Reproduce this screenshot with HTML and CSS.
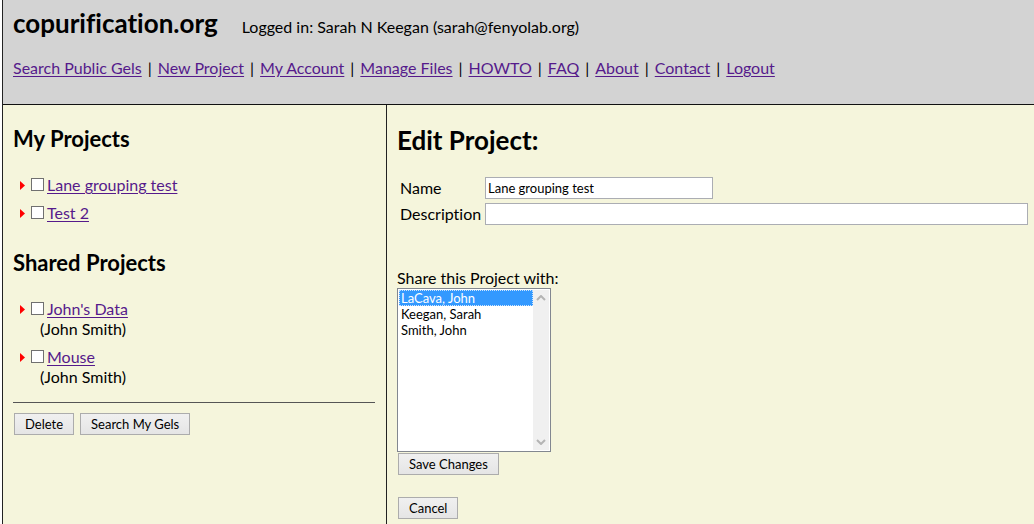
FILE: index.html
```html
<!DOCTYPE html>
<html lang="en">
<head>
<meta charset="utf-8">
<title>copurification.org</title>
<link rel="stylesheet" href="styles.css">
</head>
<body>
<div class="page">
  <header class="header">
    <div class="brand">
      <h1 class="site-name">copurification.org</h1>
      <span>Logged in: Sarah N Keegan (sarah@fenyolab.org)</span>
    </div>
    <nav class="nav">
      <a href="#">Search Public Gels</a><span>|</span>
      <a href="#">New Project</a><span>|</span>
      <a href="#">My Account</a><span>|</span>
      <a href="#">Manage Files</a><span>|</span>
      <a href="#">HOWTO</a><span>|</span>
      <a href="#">FAQ</a><span>|</span>
      <a href="#">About</a><span>|</span>
      <a href="#">Contact</a><span>|</span>
      <a href="#">Logout</a>
    </nav>
  </header>
  <div class="columns">
    <aside class="sidebar">
      <h2 class="section-title">My Projects</h2>
      <ul class="projects">
        <li>
          <div class="project"><svg class="arrow" viewBox="0 0 5 9"><path d="M0 0L5 4.500L0 9Z"/></svg><input type="checkbox" class="check" aria-label="Select Lane grouping test"><a href="#">Lane grouping test</a></div>
        </li>
        <li>
          <div class="project"><svg class="arrow" viewBox="0 0 5 9"><path d="M0 0L5 4.500L0 9Z"/></svg><input type="checkbox" class="check" aria-label="Select Test 2"><a href="#">Test 2</a></div>
        </li>
      </ul>
      <h2 class="section-title">Shared Projects</h2>
      <ul class="projects">
        <li>
          <div class="project"><svg class="arrow" viewBox="0 0 5 9"><path d="M0 0L5 4.500L0 9Z"/></svg><input type="checkbox" class="check" aria-label="Select John's Data"><a href="#">John's Data</a></div>
          <div class="owner">(John Smith)</div>
        </li>
        <li>
          <div class="project"><svg class="arrow" viewBox="0 0 5 9"><path d="M0 0L5 4.500L0 9Z"/></svg><input type="checkbox" class="check" aria-label="Select Mouse"><a href="#">Mouse</a></div>
          <div class="owner">(John Smith)</div>
        </li>
      </ul>
      <hr class="rule">
      <div class="actions">
        <button class="button" type="button">Delete</button>
        <button class="button" type="button">Search My Gels</button>
      </div>
    </aside>
    <main class="main">
      <h2 class="form-title">Edit Project:</h2>
      <form>
        <div class="fields">
          <label for="name">Name</label>
          <input class="text name" id="name" type="text" value="Lane grouping test">
          <label for="description">Description</label>
          <input class="text" id="description" type="text">
        </div>
        <label class="share-label" for="share">Share this Project with:</label>
        <div class="listbox">
          <select class="list" id="share" size="10" multiple>
            <option selected>LaCava, John</option>
            <option>Keegan, Sarah</option>
            <option>Smith, John</option>
          </select>
          <div class="track" aria-hidden="true">
            <svg class="chevron" viewBox="0 0 10 6"><path d="M1 5L5 1L9 5"/></svg>
            <svg class="chevron" viewBox="0 0 10 6"><path d="M1 1L5 5L9 1"/></svg>
          </div>
        </div>
        <div class="form-actions">
          <button class="button" type="button">Save Changes</button>
          <button class="button" type="button">Cancel</button>
        </div>
      </form>
    </main>
  </div>
</div>
</body>
</html>
```
FILE: styles.css
```css
* { box-sizing: border-box; }

body {
  margin: 0;
  background: #fff;
  color: #000;
  font: 16px/20px "Trebuchet MS", Lato, sans-serif;
  font-variant-ligatures: none;
}

a { color: #551a8b; text-underline-offset: 2px; }

.page {
  display: flex;
  flex-direction: column;
  min-height: 100vh;
  margin-left: 2px;
  border-left: 1px solid #222;
  background: #f5f5dc;
}

.header {
  padding: 7px 10px 26px;
  border-bottom: 1px solid #111;
  background: #d3d3d3;
}

.brand { display: flex; align-items: baseline; gap: 24px; }

.site-name { margin: 0; font-size: 26px; line-height: 32px; }

.nav { display: flex; flex-wrap: wrap; gap: 6px; margin-top: 19px; }

.columns { display: flex; flex: 1; }

.sidebar {
  width: 384px;
  flex-shrink: 0;
  padding: 20px 11px 20px 10px;
  border-right: 1px solid #222;
}

.section-title { margin: 0; font-size: 22px; line-height: 28px; }

.projects {
  display: flex;
  flex-direction: column;
  gap: 8px;
  margin: 22px 0 26px;
  padding: 0 0 0 7px;
  list-style: none;
}

.project { display: flex; align-items: center; }

.arrow { width: 5px; height: 9px; margin-right: 6px; fill: #f00; }

.check {
  appearance: none;
  width: 13px;
  height: 13px;
  margin: 0 3px 2px 0;
  border: 1px solid #707070;
  background: #fff;
}

.owner { padding-left: 20px; }

.rule { margin: -11px 0 10px; border: 0; border-top: 1px solid #555; }

.actions { display: flex; gap: 6px; padding-left: 1px; }

.button {
  height: 22px;
  padding: 0 10px;
  border: 1px solid #acacac;
  background: linear-gradient(#f0f0f0, #e5e5e5);
  color: #000;
  font: 13px/18px "Trebuchet MS", Lato, sans-serif;
}

.main { flex: 1; min-width: 0; padding: 19px 6px 5px 10px; }

.form-title { margin: 0; font-size: 26px; line-height: 32px; }

.fields {
  display: grid;
  grid-template-columns: 81px 1fr;
  align-items: center;
  gap: 4px;
  margin: 21px 0 43px;
  padding-left: 3px;
}

.text {
  width: 100%;
  height: 22px;
  padding: 0 2px;
  border: 1px solid #abadb3;
  background: #fff;
  font: 13px/18px "Trebuchet MS", Lato, sans-serif;
}

.name { width: 228px; }

.share-label { display: block; }

.listbox {
  display: flex;
  width: 154px;
  height: 164px;
  padding: 1px;
  border: 1px solid #828790;
  background: #fff;
}

.list {
  flex: 1;
  min-width: 0;
  padding: 0;
  border: 0;
  outline: 0;
  overflow: hidden;
  background: #fff;
  font: 13px/16px "Trebuchet MS", Lato, sans-serif;
}

.list option { height: 16px; min-height: 16px; padding: 0 2px; color: #000; line-height: 16px; }

.list option:checked {
  background: #39f linear-gradient(#39f, #39f);
  color: #fff;
  outline: 1px dotted #cde5ff;
  outline-offset: -1px;
}

.track {
  display: flex;
  flex-direction: column;
  align-items: center;
  justify-content: space-between;
  width: 16px;
  padding: 5px 0;
  background: #f0f0f0;
}

.chevron { width: 10px; height: 6px; fill: none; stroke: #b4b4b4; stroke-width: 2; }

.form-actions {
  display: flex;
  flex-direction: column;
  align-items: flex-start;
  gap: 22px;
  padding: 1px;
}
```
